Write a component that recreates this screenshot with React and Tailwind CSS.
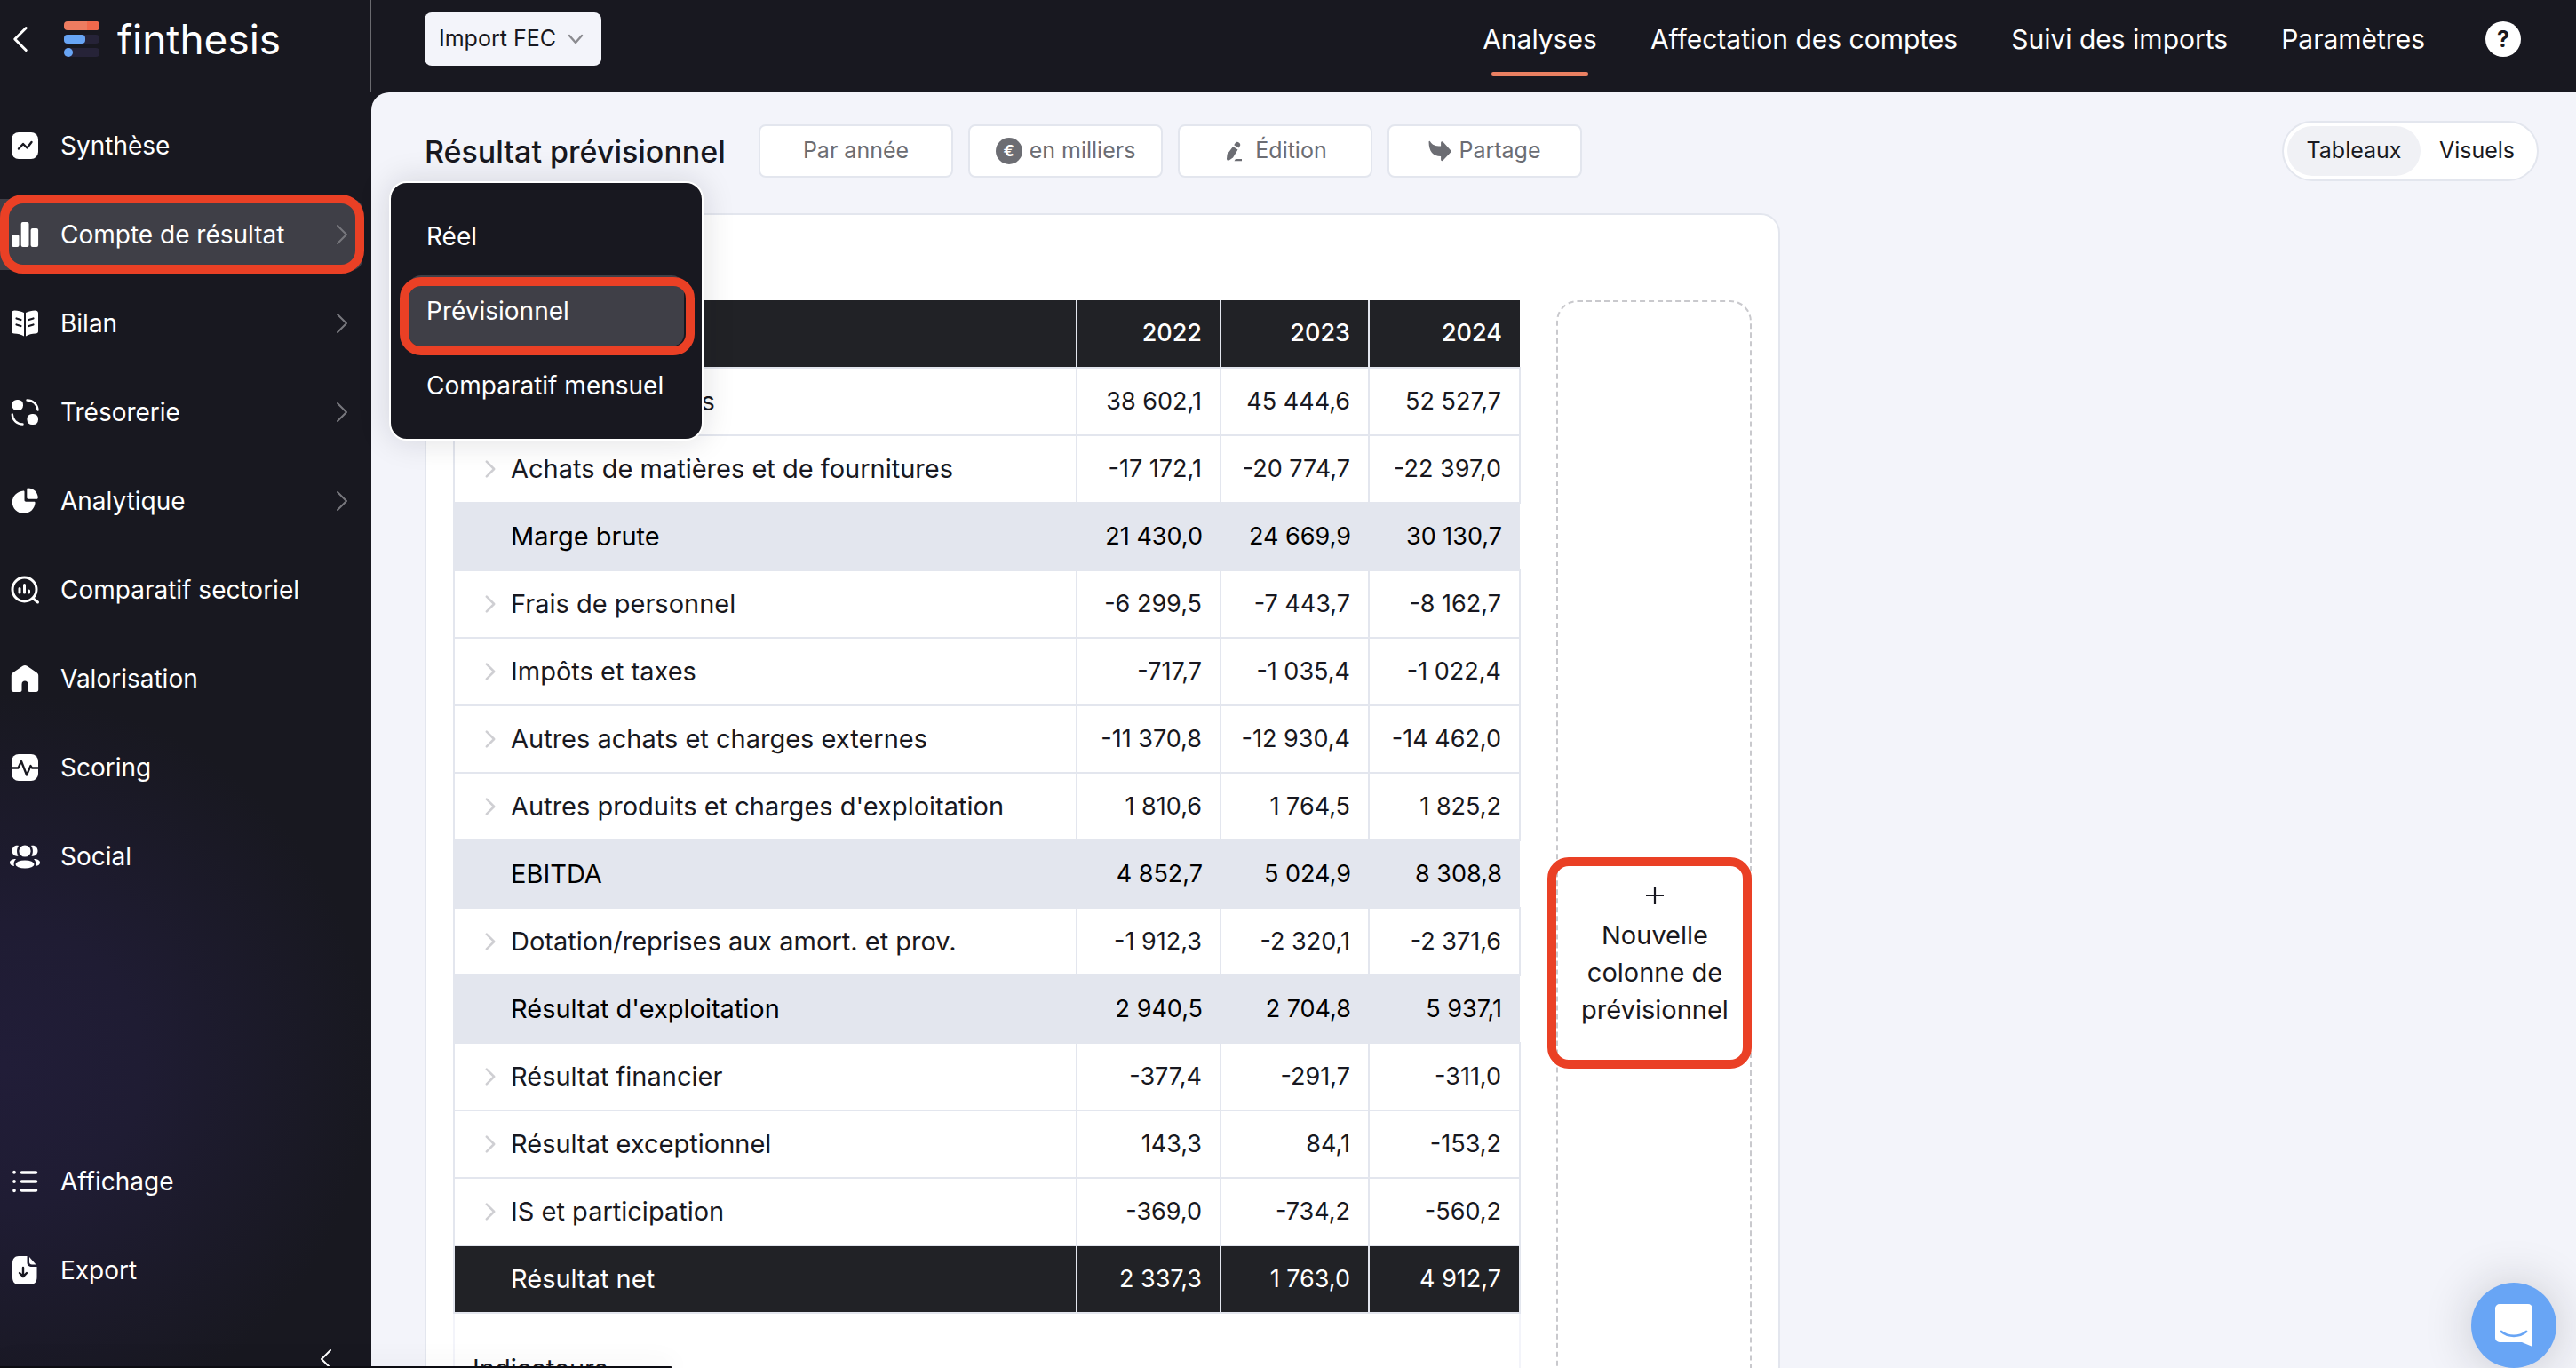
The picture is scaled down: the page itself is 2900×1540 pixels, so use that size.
const ROWS = [
  { label: "Chiffre d'affaires", values: ['38 602,1', '45 444,6', '52 527,7'], kind: 'line' },
  { label: 'Achats de matières et de fournitures', values: ['-17 172,1', '-20 774,7', '-22 397,0'], kind: 'line' },
  { label: 'Marge brute', values: ['21 430,0', '24 669,9', '30 130,7'], kind: 'subtotal' },
  { label: 'Frais de personnel', values: ['-6 299,5', '-7 443,7', '-8 162,7'], kind: 'line' },
  { label: 'Impôts et taxes', values: ['-717,7', '-1 035,4', '-1 022,4'], kind: 'line' },
  { label: 'Autres achats et charges externes', values: ['-11 370,8', '-12 930,4', '-14 462,0'], kind: 'line' },
  { label: "Autres produits et charges d'exploitation", values: ['1 810,6', '1 764,5', '1 825,2'], kind: 'line' },
  { label: 'EBITDA', values: ['4 852,7', '5 024,9', '8 308,8'], kind: 'subtotal' },
  { label: 'Dotation/reprises aux amort. et prov.', values: ['-1 912,3', '-2 320,1', '-2 371,6'], kind: 'line' },
  { label: "Résultat d'exploitation", values: ['2 940,5', '2 704,8', '5 937,1'], kind: 'subtotal' },
  { label: 'Résultat financier', values: ['-377,4', '-291,7', '-311,0'], kind: 'line' },
  { label: 'Résultat exceptionnel', values: ['143,3', '84,1', '-153,2'], kind: 'line' },
  { label: 'IS et participation', values: ['-369,0', '-734,2', '-560,2'], kind: 'line' },
  { label: 'Résultat net', values: ['2 337,3', '1 763,0', '4 912,7'], kind: 'total' },
];

const ROW_STYLES = {
  line: 'bg-white text-[#181820]',
  subtotal: 'bg-[#e3e6ee] text-black',
  total: 'bg-[#212226] text-white',
};

// 32x32 sidebar icons
const ICONS = {
  synthese: (
    <>
      <rect x="1" y="1" width="30" height="30" rx="8" fill="#fff" />
      <path d="M9 19.5l5-5.5 4.500 4.500 5-6.500" fill="none" stroke="#181820" strokeWidth="2.4" strokeLinecap="round" strokeLinejoin="round" />
    </>
  ),
  resultat: (
    <g fill="#fff">
      <rect x="1" y="16" width="8.500" height="14" rx="2" />
      <rect x="11.700" y="2" width="8.800" height="28" rx="2" />
      <rect x="22.600" y="9" width="8.500" height="21" rx="2" />
    </g>
  ),
  bilan: (
    <>
      <path d="M1 4.500C1 2.500 2.500 1.500 4.500 1.500C8 1.500 12 2.500 15 4V30.500C12 28.500 8 27.500 4 27.500C2 27.500 1 26.500 1 25Z" fill="#fff" />
      <path d="M31 4.500C31 2.500 29.500 1.500 27.500 1.500C24 1.500 20 2.500 17 4V30.500C20 28.500 24 27.500 28 27.500C30 27.500 31 26.500 31 25Z" fill="#fff" />
      <path d="M6.500 10.500l5 1.500M6.500 17.500l5 1.500M25.500 10.500l-5 1.500M25.500 17.500l-5 1.500" stroke="#181820" strokeWidth="2.200" strokeLinecap="round" />
    </>
  ),
  tresorerie: (
    <>
      <rect x="1.500" y="2" width="12.500" height="12" rx="5.500" fill="#fff" />
      <rect x="18.500" y="18" width="12.500" height="12" rx="5.500" fill="#fff" />
      <path d="M18.500 2.500C25 2.500 30 7 30.500 13.500M13.500 29.500C7 29.500 2 25 1.800 18.500" fill="none" stroke="#fff" strokeWidth="2.400" strokeLinecap="round" />
    </>
  ),
  analytique: (
    <g fill="#fff">
      <path d="M14.500 4.500C15 4.500 15.500 5 15.500 5.500V15C15.500 16 16.200 16.700 17.200 16.700H26.500C27.200 16.700 27.700 17.300 27.600 18C27 25 21.500 30 14.800 30C7.500 30 1.800 24.500 1.800 17.300C1.800 10.500 7.500 4.900 14.500 4.500Z" />
      <path d="M19.500 1.500C25.500 1.500 30.500 6 30.700 12.200C30.700 13 30.200 13.700 29.400 13.700H20C19 13.700 18.300 13 18.300 12V2.800C18.300 2 18.800 1.500 19.500 1.500Z" />
    </g>
  ),
  sectoriel: (
    <g fill="none" stroke="#fff" strokeWidth="3" strokeLinecap="round">
      <circle cx="15.500" cy="15.500" r="13.500" />
      <path d="M25.500 26l5 4" />
      <path d="M10 14.500v4.500M15.500 10.500v8.500M20.500 17v2" />
    </g>
  ),
  valorisation: (
    <path d="M.8 12.500C.8 11 1.400 10 2.500 9.200L13.500 1.800C15.200.7 16.800.7 18.500 1.800L29.500 9.200C30.600 10 31.200 11 31.200 12.500V28.500C31.200 30 30.200 31 28.700 31H21.500C20.200 31 19.500 30.300 19.500 29V22.500C19.500 19.500 18 18.500 16 18.500C14 18.500 12.500 19.500 12.500 22.500V29C12.500 30.300 11.800 31 10.500 31H3.300C1.800 31 .8 30 .8 28.500Z" fill="#fff" />
  ),
  scoring: (
    <>
      <rect x="1" y="1" width="30" height="30" rx="8" fill="#fff" />
      <path d="M1 16.500h7.500l3.500-7.500 6 15.500 4.500-10.500 1.500 2.500H31" fill="none" stroke="#181820" strokeWidth="2.300" strokeLinejoin="round" />
    </>
  ),
  social: (
    <g fill="#fff">
      <circle cx="16" cy="10" r="6.600" />
      <ellipse cx="16" cy="25" rx="10.500" ry="4.500" />
      <path d="M9 4C4.500 3 1.500 6 1.500 9.800C1.500 13.600 4.500 16.500 8.500 15.500C6.500 12 6.500 7.500 9 4ZM23 4C27.500 3 30.500 6 30.500 9.800C30.500 13.600 27.500 16.500 23.500 15.500C25.500 12 25.500 7.500 23 4Z" />
      <path d="M6 19C2 19 -1 20.500 -1 23C-1 25.300 1 26.500 4 27C3 24 3.700 21 6 19ZM26 19C30 19 33 20.500 33 23C33 25.300 31 26.500 28 27C29 24 28.300 21 26 19Z" />
    </g>
  ),
  affichage: (
    <g stroke="#fff" strokeWidth="3.600" strokeLinecap="round">
      <path d="M12.500 6H28.500M12.500 16H28.500M12.500 26H28.500M4 5.500v.5M4 15.800v.5M4 26v.5" />
    </g>
  ),
  export: (
    <>
      <path d="M9 0H18.500V7C18.500 10.500 20.500 12 24 12H29.500V24C29.500 29 27 32 22 32H9C4.500 32 2 29 2 24V8C2 3 4.500 0 9 0ZM21 1L28.500 9.500H24C22 9.500 21 8.500 21 6.500Z" fill="#fff" />
      <path d="M14 13v9.500M10 19l4 4.200 4-4.200" fill="none" stroke="#181820" strokeWidth="2.400" strokeLinecap="round" strokeLinejoin="round" />
    </>
  ),
};

const MAIN_ITEMS = [
  { icon: 'synthese', label: 'Synthèse' },
  { icon: 'resultat', label: 'Compte de résultat', more: true, active: true },
  { icon: 'bilan', label: 'Bilan', more: true },
  { icon: 'tresorerie', label: 'Trésorerie', more: true },
  { icon: 'analytique', label: 'Analytique', more: true },
  { icon: 'sectoriel', label: 'Comparatif sectoriel' },
  { icon: 'valorisation', label: 'Valorisation' },
  { icon: 'scoring', label: 'Scoring' },
  { icon: 'social', label: 'Social' },
];

const BOTTOM_ITEMS = [
  { icon: 'affichage', label: 'Affichage' },
  { icon: 'export', label: 'Export' },
];

function Chevron({ className, left = false, width = 2 }) {
  return (
    <svg viewBox="0 0 14 24" className={className} fill="none" stroke="currentColor" strokeWidth={width} strokeLinecap="round" strokeLinejoin="round" aria-hidden="true">
      <path d={left ? 'M12 2L2 12l10 10' : 'M2 2l10 10L2 22'} />
    </svg>
  );
}

function SubMenu() {
  return (
    <div className="absolute left-[438px] -top-5 z-20 w-[354px] h-[292px] rounded-[20px] border-2 border-white bg-[#181820] px-5 py-5 flex flex-col gap-1 shadow-[0_0_36px_rgba(24,24,32,0.14)]">
      <a href="#reel" className="h-20 px-5 flex items-center">Réel</a>
      <a href="#previsionnel" className="relative h-20 px-5 flex items-center rounded-[14px] bg-[#3f3f47]">
        Prévisionnel
        <span className="absolute -left-2.5 -right-3 top-0.5 -bottom-2.5 rounded-[24px] border-10 border-[#ea4025]" />
      </a>
      <a href="#comparatif" className="h-20 px-5 flex items-center whitespace-nowrap">Comparatif mensuel</a>
    </div>
  );
}

function NavItem({ item }) {
  return (
    <li className="relative">
      <a
        href="#"
        className={`h-20 mr-2.5 pl-3 pr-4 flex items-center rounded-r-xl ${item.active ? 'bg-[#3f3f47]' : ''}`}
      >
        <svg viewBox="0 0 32 32" className="w-8 h-8 mr-6 shrink-0 overflow-visible" aria-hidden="true">
          {ICONS[item.icon]}
        </svg>
        <span className="flex-1 whitespace-nowrap">{item.label}</span>
        {item.more && <Chevron className="w-[14px] h-6 text-[#77777d]" />}
      </a>
      {item.active && (
        <>
          <span className="absolute left-0 right-2 -top-[5px] -bottom-1 rounded-[26px] border-10 border-[#ea4025]" />
          <SubMenu />
        </>
      )}
    </li>
  );
}

function Sidebar() {
  return (
    <aside className="relative w-[418px] shrink-0 flex flex-col text-white text-[28px] bg-[radial-gradient(circle_at_0px_1200px,#211d38_0px,#1f1c33_160px,#181820_420px)]">
      <div className="h-26 shrink-0 pb-4 pl-3.5 flex items-center border-r-2 border-[#6b6b70]">
        <button type="button" aria-label="Retour" className="mr-10">
          <Chevron left width={2.4} className="w-[18px] h-[30px]" />
        </button>
        <svg viewBox="0 0 40 42" className="w-10 h-[42px] mr-5" aria-hidden="true">
          <rect y="1" width="40" height="10" rx="4" fill="#ed7c60" />
          <path d="M26 1h10a4 4 0 0 1 4 4v2a4 4 0 0 1-4 4H26z" fill="#f0694c" />
          <rect y="16" width="40" height="10" rx="4" fill="#262338" />
          <rect y="16" width="24" height="10" rx="4" fill="#68a5f5" />
          <rect y="31" width="40" height="10" rx="4" fill="#262338" />
          <rect y="31" width="10" height="10" rx="5" fill="#68a5f5" />
        </svg>
        <span className="text-[46px] leading-none">finthesis</span>
      </div>
      <nav className="flex-1 pt-5 flex flex-col">
        <ul className="flex flex-col gap-5">
          {MAIN_ITEMS.map((item) => <NavItem key={item.label} item={item} />)}
        </ul>
        <ul className="mt-auto flex flex-col gap-5">
          {BOTTOM_ITEMS.map((item) => <NavItem key={item.label} item={item} />)}
        </ul>
      </nav>
      <div className="h-[70px] shrink-0 pt-12 pr-11 flex justify-end">
        <button type="button" aria-label="Réduire le menu" className="h-6">
          <Chevron left className="w-[14px] h-6" />
        </button>
      </div>
    </aside>
  );
}

function TopBar() {
  return (
    <header className="h-26 shrink-0 pl-15 pr-[62px] pb-4 flex items-center justify-between text-white">
      <div className="relative">
        <select aria-label="Dossier" className="appearance-none w-[199px] h-15 pl-4 rounded-lg bg-[#f3f4fa] text-[#181820] text-[25px]">
          <option>Import FEC</option>
        </select>
        <svg viewBox="0 0 18 12" className="absolute right-5 top-6 w-[18px] h-3 pointer-events-none" fill="none" stroke="#8b8b90" strokeWidth="2.400" strokeLinecap="round" strokeLinejoin="round">
          <path d="M2 2l7 8 7-8" />
        </svg>
      </div>
      <nav className="flex items-center gap-15 text-[30px]">
        <a href="#analyses" className="relative">
          Analyses
          <span className="absolute left-2.5 right-2.5 -bottom-[18px] h-1 rounded-full bg-[#ea8062]" />
        </a>
        <a href="#affectation">Affectation des comptes</a>
        <a href="#imports">Suivi des imports</a>
        <a href="#parametres">Paramètres</a>
        <button type="button" aria-label="Aide" className="ml-2 w-10 h-10 rounded-full bg-white text-[#181820] text-[25px] font-bold leading-none">
          ?
        </button>
      </nav>
    </header>
  );
}

function ToolButton({ icon, children }) {
  return (
    <button type="button" className="w-[219px] h-15 flex items-center justify-center gap-2 rounded-lg border-2 border-[#e3e6ee] bg-white text-[#6c6d73] text-[25px]">
      {icon}
      {children}
    </button>
  );
}

function Toolbar() {
  return (
    <div className="flex items-center justify-between pr-[42px]">
      <div className="flex items-center">
        <h1 className="w-[376px] text-[34px] font-medium text-[#181820] whitespace-nowrap">Résultat prévisionnel</h1>
        <div className="flex gap-[17px]">
          <ToolButton>Par année</ToolButton>
          <ToolButton
            icon={<span className="w-[30px] h-[30px] rounded-full bg-[#6c6d73] text-white text-[18px] font-bold leading-[30px]">€</span>}
          >
            en milliers
          </ToolButton>
          <ToolButton
            icon={
              <svg viewBox="0 0 24 24" className="w-6 h-6 mr-1" fill="currentColor" aria-hidden="true">
                <path d="M11 7l5.500 3.500-5.500 9-4 2.800c-1.500.9-3 0-3-1.600l.5-5zM12.200 5.200l1.500-2.300c1-1.200 2.500-1.500 4-.5s2 2.600 1.200 3.900l-1.300 2.300z" />
                <path d="M14 21h7v2.200h-8.500z" />
              </svg>
            }
          >
            Édition
          </ToolButton>
          <ToolButton
            icon={
              <svg viewBox="0 0 24 24" className="w-[26px] h-[26px]" fill="currentColor" aria-hidden="true">
                <path d="M.5 2.500C.5 1.500 1.500 1.500 2 2.300C4 5.500 7 7 13 7V3.500C13 2 14.300 1.600 15.300 2.500L23 11c.8.900.8 1.600 0 2.500l-7.700 8.300c-1 1-2.300.5-2.300-1V17.500C5 17.500.5 12.500.5 2.500Z" />
              </svg>
            }
          >
            Partage
          </ToolButton>
        </div>
      </div>
      <div className="flex items-center h-[68px] px-1 rounded-full border-2 border-[#e3e6ee] bg-white text-[25px] text-[#181820]">
        <button type="button" className="h-14 w-[150px] rounded-full bg-[#f0f1f5]">Tableaux</button>
        <button type="button" className="h-14 w-[127px]">Visuels</button>
      </div>
    </div>
  );
}

function ResultTable() {
  return (
    <div className="w-[1202px]">
      <table className="w-full table-fixed border-collapse text-[27px]">
        <colgroup>
          <col />
          <col className="w-[162px]" />
          <col className="w-[167px]" />
          <col className="w-[170px]" />
        </colgroup>
        <thead>
          <tr className="h-[76px] bg-[#212226] text-white">
            <th className="rounded-tl-lg" aria-label="Poste" />
            {['2022', '2023', '2024'].map((year) => (
              <th key={year} className="pr-5 text-right font-medium border-l-2 border-[#e3e6ee]">{year}</th>
            ))}
          </tr>
        </thead>
        <tbody>
          {ROWS.map((row) => (
            <tr key={row.label} className={`h-[76px] ${ROW_STYLES[row.kind]}`}>
              <th className="p-0 border-2 border-[#e3e6ee] text-left text-[29px] font-normal whitespace-nowrap">
                <div className="pl-[34px] flex items-center">
                  <span className="w-[29px]">
                    {row.kind === 'line' && <Chevron width={3} className="w-3 h-5 text-[#cfcfd3]" />}
                  </span>
                  {row.label}
                </div>
              </th>
              {row.values.map((value, i) => (
                <td
                  key={i}
                  className={`p-0 pr-5 text-right whitespace-nowrap border-y-2 border-[#e3e6ee] ${row.kind === 'subtotal' ? '' : 'border-x-2'}`}
                >
                  {value}
                </td>
              ))}
            </tr>
          ))}
        </tbody>
      </table>
      <div className="h-60 border-x-2 border-[#f3f4fa] px-5 pt-10">
        <h2 className="text-[29px] text-[#181820]">Indicateurs</h2>
      </div>
    </div>
  );
}

function NewColumn() {
  return (
    <div className="w-[220px] rounded-[24px] border-2 border-dashed border-[#c9c9cd] pt-[625px]">
      <button type="button" className="relative -ml-3 w-[230px] h-[238px] pl-3 pb-3 flex flex-col items-center justify-center text-[29px] leading-[42px] text-[#181820]">
        <svg viewBox="0 0 20 20" className="w-5 h-5 mb-3.5" stroke="currentColor" strokeWidth="2.200" aria-hidden="true">
          <path d="M10 0v20M0 10h20" />
        </svg>
        Nouvelle
        <br />
        colonne de
        <br />
        prévisionnel
        <span className="absolute inset-0 rounded-[24px] border-10 border-[#ea4025]" />
      </button>
    </div>
  );
}

export default function App() {
  return (
    <div className="relative h-screen overflow-hidden flex bg-[#181820] font-[Inter,sans-serif]">
      <Sidebar />
      <div className="flex-1 min-w-0 flex flex-col">
        <TopBar />
        <main className="flex-1 min-h-0 overflow-hidden rounded-tl-[20px] bg-[#f3f4fa] pl-15 pt-8">
          <Toolbar />
          <section className="mt-9 w-fit rounded-[22px] border-2 border-[#e3e6ee] bg-white px-[30px] pt-24 flex gap-10">
            <ResultTable />
            <NewColumn />
          </section>
        </main>
      </div>
      <div className="absolute left-0 bottom-0 w-[757px] h-0.5 rounded-tr bg-[#0c0c12] shadow-[0_0_28px_rgba(24,24,60,0.3)]" />
      <button type="button" aria-label="Ouvrir la messagerie" className="absolute right-[22px] bottom-0 w-24 h-24 rounded-full bg-[#68a5f5] flex items-center justify-center shadow-[0_2px_56px_rgba(24,24,32,0.2)]">
        <svg viewBox="0 0 42 48" className="w-[42px] h-12" aria-hidden="true">
          <path d="M5 0h32a5 5 0 0 1 5 5v43l-12-5H5a5 5 0 0 1-5-5V5a5 5 0 0 1 5-5z" fill="#fff" />
          <path d="M7 31c8 6.500 20 6.500 28 0" fill="none" stroke="#68a5f5" strokeWidth="2.800" strokeLinecap="round" />
        </svg>
      </button>
    </div>
  );
}
